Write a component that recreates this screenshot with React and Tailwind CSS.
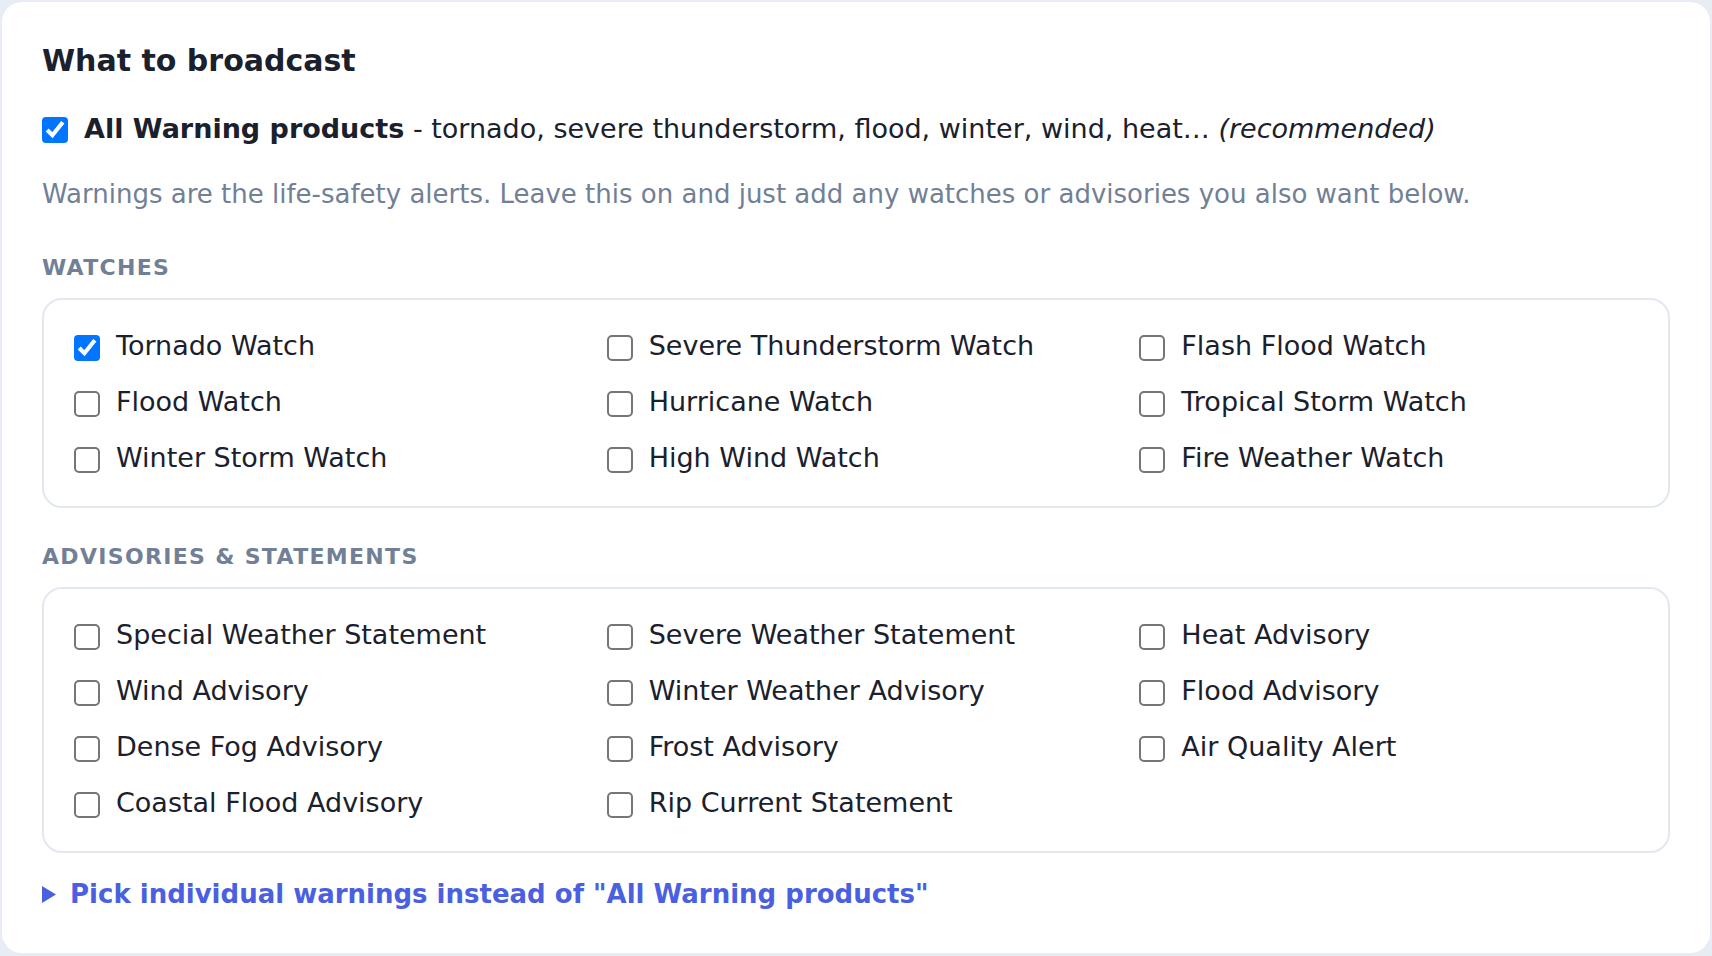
import { useState } from "react";

const watches = [
  ["Tornado Watch", true],
  ["Severe Thunderstorm Watch", false],
  ["Flash Flood Watch", false],
  ["Flood Watch", false],
  ["Hurricane Watch", false],
  ["Tropical Storm Watch", false],
  ["Winter Storm Watch", false],
  ["High Wind Watch", false],
  ["Fire Weather Watch", false],
];

const advisories = [
  "Special Weather Statement",
  "Severe Weather Statement",
  "Heat Advisory",
  "Wind Advisory",
  "Winter Weather Advisory",
  "Flood Advisory",
  "Dense Fog Advisory",
  "Frost Advisory",
  "Air Quality Alert",
  "Coastal Flood Advisory",
  "Rip Current Statement",
];

function Check({ label, checked }) {
  return (
    <label className="flex items-start gap-[16px] leading-[42px]">
      <span className="mt-[10px] block shrink-0">
        <input type="checkbox" defaultChecked={checked} className="m-0 block [zoom:2]" />
      </span>
      <span>{label}</span>
    </label>
  );
}

function SectionLabel({ children }) {
  return (
    <h3 className="text-[22px] font-bold uppercase leading-[30px] tracking-[0.06em] text-[#718096]">
      {children}
    </h3>
  );
}

function App() {
  const [open, setOpen] = useState(false);

  return (
    <div
      className="min-h-screen bg-[#e8ecf4] p-[2px]"
      style={{ fontFamily: '"DejaVu Sans", "Noto Sans", sans-serif' }}
    >
      <div className="rounded-[20px] bg-white px-[40px] pb-[40px] pt-[40px] text-[#1a202c]">
        <h2 className="text-[30px] font-bold leading-[37px]">What to broadcast</h2>

        <label className="mt-[30px] flex items-start gap-[16px] text-[27px] leading-[40px]">
          <span className="mt-[8px] block shrink-0">
            <input type="checkbox" defaultChecked className="m-0 block [zoom:2]" />
          </span>
          <span>
            <strong className="font-bold">All Warning products</strong> - tornado, severe
            thunderstorm, flood, winter, wind, heat… <em>(recommended)</em>
          </span>
        </label>

        <p className="mt-[26px] text-[26px] leading-[38px] text-[#718096]">
          Warnings are the life-safety alerts. Leave this on and just add any watches or
          advisories you also want below.
        </p>

        <div className="mt-[40px]">
          <SectionLabel>Watches</SectionLabel>
          <div className="mt-[15px] grid grid-cols-3 gap-x-[34px] gap-y-[14px] rounded-[20px] border-2 border-[#e2e8f0] px-[30px] pb-[27px] pt-[25px] text-[27px]">
            {watches.map(([name, on]) => (
              <Check key={name} label={name} checked={on} />
            ))}
          </div>
        </div>

        <div className="mt-[34px]">
          <SectionLabel>Advisories &amp; Statements</SectionLabel>
          <div className="mt-[15px] grid grid-cols-3 gap-x-[34px] gap-y-[14px] rounded-[20px] border-2 border-[#e2e8f0] px-[30px] pb-[27px] pt-[25px] text-[27px]">
            {advisories.map((name) => (
              <Check key={name} label={name} checked={false} />
            ))}
          </div>
        </div>

        <button
          type="button"
          onClick={() => setOpen(!open)}
          className="mt-[22px] flex cursor-pointer items-center gap-[14px] text-[26px] font-bold leading-[38px] text-[#4b5fe1]"
        >
          <svg width="14" height="17" viewBox="0 0 14 17" className={open ? "rotate-90" : ""}>
            <polygon points="0,0 14,8.5 0,17" fill="currentColor" />
          </svg>
          <span>Pick individual warnings instead of "All Warning products"</span>
        </button>
      </div>
    </div>
  );
}

export default App;
